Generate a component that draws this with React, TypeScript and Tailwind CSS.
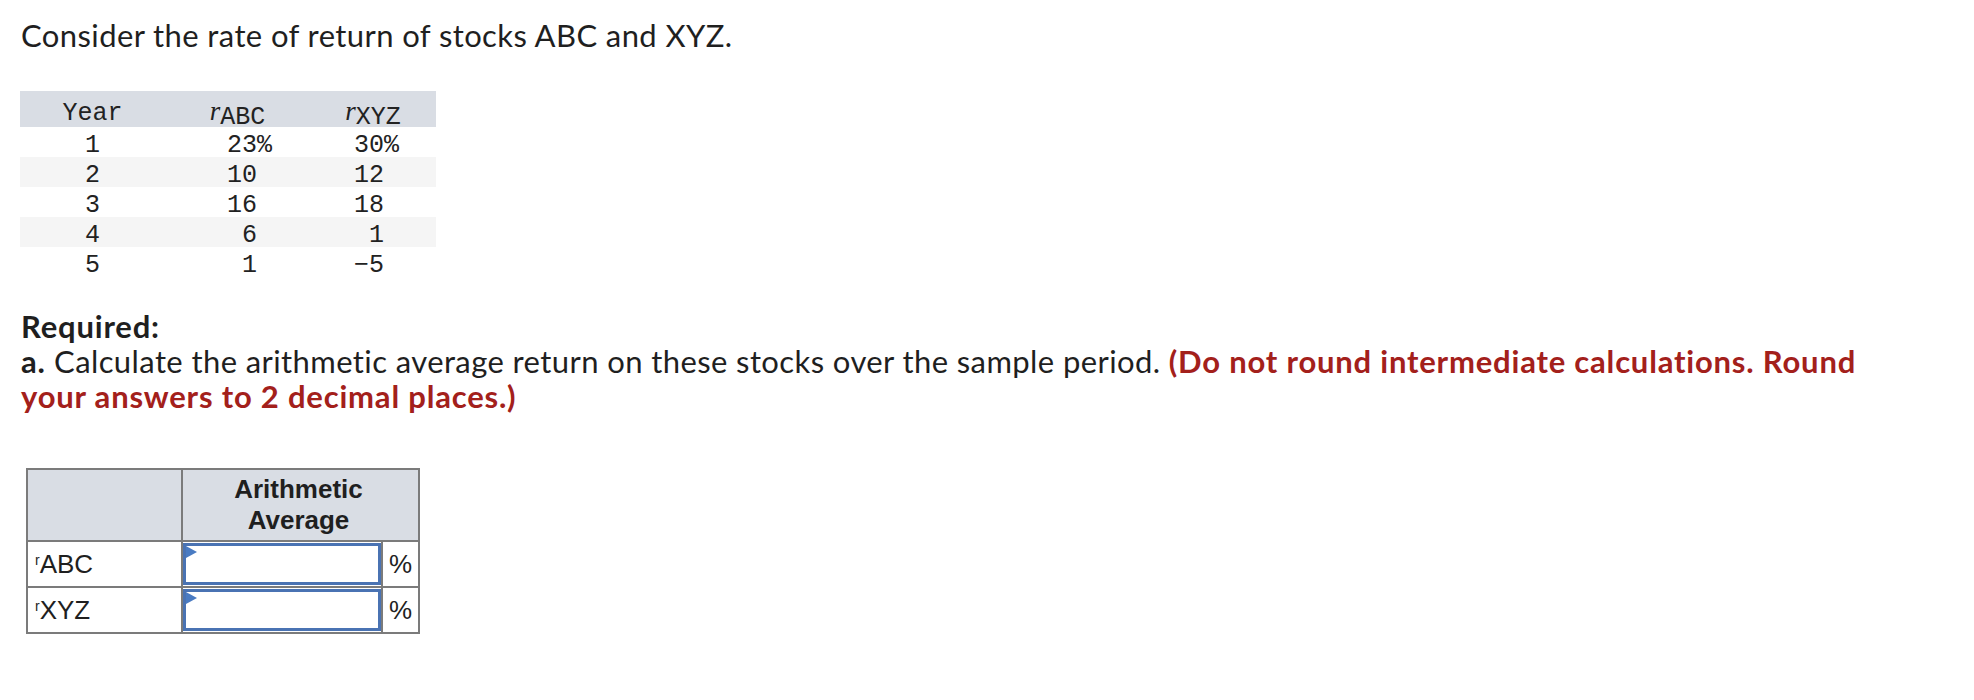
import React from "react";

const rows: [string, string, string][] = [
  ["1", "23", "30"],
  ["2", "10", "12"],
  ["3", "16", "18"],
  ["4", "6", "1"],
  ["5", "1", "\u22125"],
];

function Flag() {
  return (
    <svg
      className="absolute left-0 top-0"
      width="11"
      height="12"
      viewBox="0 0 11 12"
    >
      <polygon points="0,0 11,6 0,12" fill="#4a7bc2" />
    </svg>
  );
}

function InputCell() {
  return (
    <td className="w-[200px] border-2 border-[#7b7b7b] p-0">
      <div className="relative h-[42px] border-[3px] border-[#4a73b3] bg-white">
        <Flag />
      </div>
    </td>
  );
}

export default function App() {
  return (
    <div className="w-[1974px] h-[700px] bg-white pl-[21px] pt-[17px] font-['Lato',sans-serif] text-[31px] tracking-[0.4px] text-[#1f1f1f]">
      <p className="leading-[36px]">Consider the rate of return of stocks ABC and XYZ.</p>

      <div className="mt-[38px] -ml-[1px] w-[416px] font-['Liberation_Mono',monospace] text-[25px] tracking-normal text-[#222]">
        <div className="grid h-[36px] grid-cols-[145px_145px_126px] items-center bg-[#d9dde4]">
          <div className="text-center">Year</div>
          <div className="text-center">
            <span className="font-['Liberation_Serif',serif] text-[27px] italic align-[4px]">r</span>ABC
          </div>
          <div className="text-center">
            <span className="font-['Liberation_Serif',serif] text-[27px] italic align-[4px]">r</span>XYZ
          </div>
        </div>
        {rows.map((r, i) => (
          <div
            key={r[0]}
            className={
              i % 2 === 1
                ? "grid h-[30px] grid-cols-[145px_145px_126px] items-center bg-[#f5f5f5]"
                : "grid h-[30px] grid-cols-[145px_145px_126px] items-center"
            }
          >
            <div className="text-center">{r[0]}</div>
            <div className="pr-[53px] text-right">
              {r[1]}
              {i === 0 && <span className="-mr-[15px]">%</span>}
            </div>
            <div className="pr-[52px] text-right">
              {r[2]}
              {i === 0 && <span className="-mr-[15px]">%</span>}
            </div>
          </div>
        ))}
      </div>

      <p className="mt-[32px] leading-[35px]">
        <b className="tracking-[0.8px]">Required:</b>
        <br />
        <b className="tracking-[0.8px]">a.</b> Calculate the arithmetic average return on these stocks over the sample period.{" "}
        <b className="tracking-[0.8px] text-[#a3201b]">
          (Do not round intermediate calculations. Round
          <br />
          your answers to 2 decimal places.)
        </b>
      </p>

      <table className="mt-[54px] ml-[5px] border-collapse font-['Liberation_Sans',Arial,sans-serif] text-[26px] tracking-normal text-[#1f1f1f]">
        <tbody>
          <tr className="h-[72px] bg-[#d9dde4]">
            <th className="w-[155px] border-2 border-[#7b7b7b]"></th>
            <th colSpan={2} className="border-2 border-[#7b7b7b] pr-[4px] text-center font-bold leading-[31px]">
              Arithmetic
              <br />
              Average
            </th>
          </tr>
          <tr className="h-[46px]">
            <td className="border-2 border-[#7b7b7b] pl-[7px] text-left">
              <span className="text-[14px] align-[8px]">r</span>ABC
            </td>
            <InputCell />
            <td className="w-[37px] border-2 border-[#7b7b7b] text-center">%</td>
          </tr>
          <tr className="h-[46px]">
            <td className="border-2 border-[#7b7b7b] pl-[7px] text-left">
              <span className="text-[14px] align-[8px]">r</span>XYZ
            </td>
            <InputCell />
            <td className="w-[37px] border-2 border-[#7b7b7b] text-center">%</td>
          </tr>
        </tbody>
      </table>
    </div>
  );
}
